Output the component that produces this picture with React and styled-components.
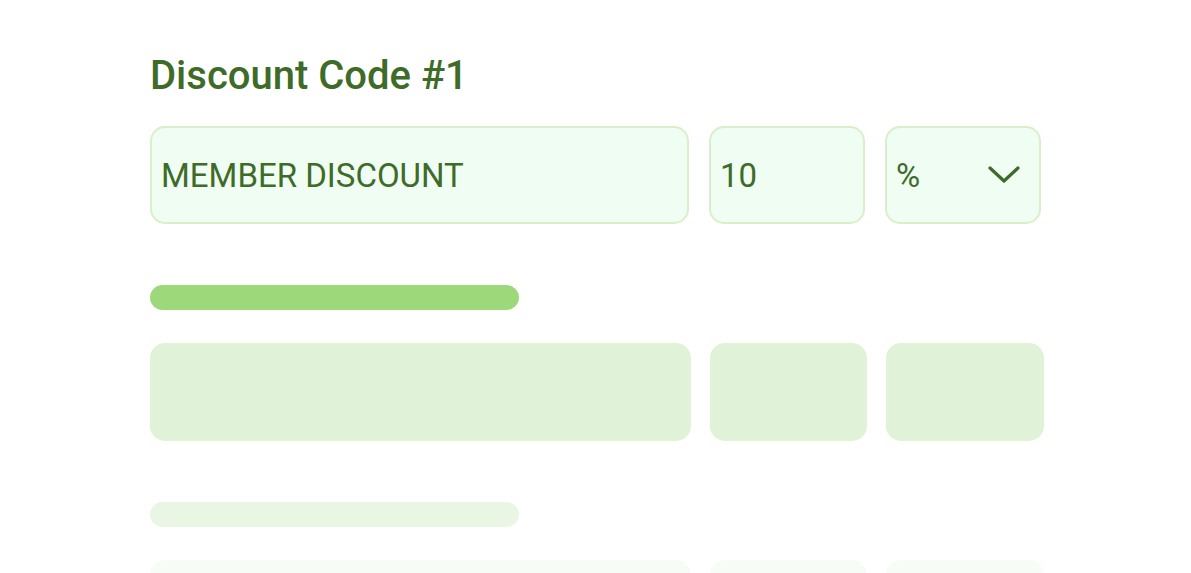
import React from "react";
import styled, { createGlobalStyle } from "styled-components";

const GlobalStyle = createGlobalStyle`
  body {
    margin: 0;
    background: #ffffff;
    font-family: Roboto, "Liberation Sans", sans-serif;
    overflow: hidden;
  }
`;

const Page = styled.div`
  width: 900px;
  padding: 51px 0 0 150px;
  height: 522px;
  overflow: hidden;
`;

const Title = styled.h2`
  margin: 1px 0 0;
  font-size: 40px;
  font-weight: 500;
  line-height: 48px;
  color: #3e6b28;
`;

const FieldRow = styled.div`
  display: grid;
  grid-template-columns: 539px 156px 156px;
  column-gap: 20px;
  margin-top: 26px;
`;

const Field = styled.div`
  box-sizing: border-box;
  height: 98px;
  display: flex;
  align-items: center;
  justify-content: space-between;
  padding: 0 19px 0 9px;
  background: #effdf3;
  border: 2px solid #d7f0c9;
  border-radius: 15px;
  font-size: 33px;
  color: #3e6b28;
`;

const Chevron = () => (
  <svg width="32" height="18" viewBox="0 0 32 18" fill="none">
    <polyline
      points="2,2 16,15 30,2"
      stroke="#3e6b28"
      strokeWidth="3.2"
      strokeLinecap="round"
      strokeLinejoin="round"
    />
  </svg>
);

const Group = styled.div`
  margin-top: ${(p) => p.$top}px;
`;

const Bar = styled.div`
  width: 369px;
  height: 25px;
  border-radius: 13px;
  background: ${(p) => p.$color};
`;

const BlockRow = styled.div`
  display: grid;
  grid-template-columns: 541px 157px 158px;
  column-gap: 19px;
  margin-top: 33px;
`;

const Block = styled.div`
  height: 98px;
  border-radius: 15px;
  background: ${(p) => p.$color};
`;

const skeletons = [
  { top: 61, bar: "#9dd97b", block: "#e0f3d9" },
  { top: 61, bar: "#e9f6e3", block: "#f8fcf6" },
];

export default function App() {
  return (
    <>
      <GlobalStyle />
      <Page>
        <Title>Discount Code #1</Title>
        <FieldRow>
          <Field>MEMBER DISCOUNT</Field>
          <Field>10</Field>
          <Field>
            %
            <Chevron />
          </Field>
        </FieldRow>
        {skeletons.map((s, i) => (
          <Group key={i} $top={s.top}>
            <Bar $color={s.bar} />
            <BlockRow>
              <Block $color={s.block} />
              <Block $color={s.block} />
              <Block $color={s.block} />
            </BlockRow>
          </Group>
        ))}
      </Page>
    </>
  );
}
